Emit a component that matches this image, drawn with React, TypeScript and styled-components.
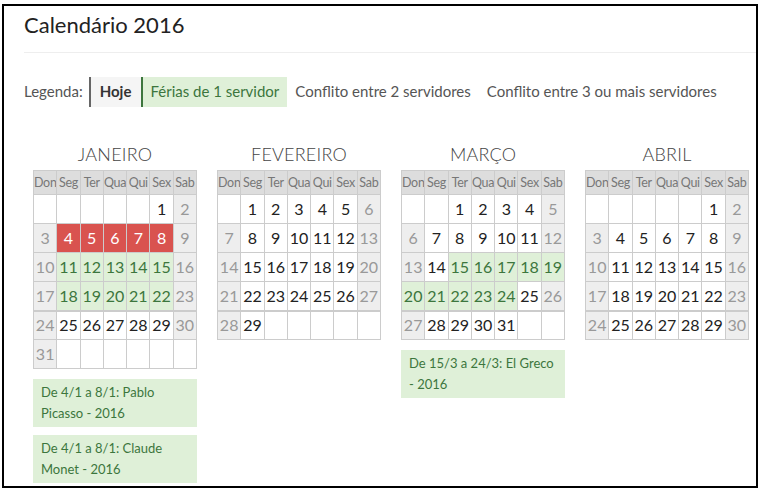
import React from "react";
import styled, { createGlobalStyle } from "styled-components";

const GlobalStyle = createGlobalStyle`
  html, body { margin: 0; padding: 0; background: #fff; }
  body { font-family: Lato, "Open Sans", sans-serif; color: #333; }
`;

const Frame = styled.div`
  box-sizing: border-box;
  width: 756px;
  height: 484px;
  margin: 4px 0 0 2px;
  border: 2px solid #000;
  overflow: hidden;
`;

const Header = styled.div`
  margin: 3px 0 0 20px;
  padding-bottom: 12px;
  border-bottom: 1px solid #eee;
`;

const Title = styled.h1`
  margin: 0;
  font-size: 22px;
  line-height: 31px;
  font-weight: 400;
  color: #222;
`;

const Legend = styled.div`
  display: flex;
  align-items: stretch;
  margin: 24px 0 0 20px;
  font-size: 15px;
  color: #555;
  height: 30px;
  line-height: 29px;
`;

const LegendLabel = styled.span`
  padding-right: 6px;
`;

const LegendItem = styled.span<{ $kind: "today" | "vac" | "plain" }>`
  padding: ${(p) => (p.$kind === "today" ? "0 10px 0 9px" : p.$kind === "vac" ? "0 8px 0 7px" : "0 8px 0 6px")};
  border-left: 2px solid
    ${(p) => (p.$kind === "today" ? "#666" : p.$kind === "vac" ? "#3c763d" : "transparent")};
  background: ${(p) => (p.$kind === "today" ? "#f5f5f5" : p.$kind === "vac" ? "#dff0d8" : "transparent")};
  color: ${(p) => (p.$kind === "today" ? "#333" : p.$kind === "vac" ? "#3c763d" : "#555")};
  font-weight: ${(p) => (p.$kind === "today" ? 700 : 400)};
`;

const Months = styled.div`
  display: grid;
  grid-template-columns: repeat(4, 164px);
  column-gap: 20px;
  align-items: start;
  margin: 35px 0 0 29px;
`;

const MonthCol = styled.div`
  display: flex;
  flex-direction: column;
`;

const MonthName = styled.div`
  text-align: center;
  font-size: 18px;
  font-weight: 300;
  line-height: 24px;
  color: #444;
  margin-bottom: 4px;
  letter-spacing: 0.2px;
`;

const Grid = styled.div`
  display: grid;
  grid-template-columns: repeat(7, 1fr);
  box-sizing: border-box;
  width: 164px;
  border-top: 1px solid #ccc;
  border-left: 1px solid #ccc;
`;

const HeadCell = styled.div`
  height: 23px;
  line-height: 23px;
  border-right: 1px solid #ccc;
  border-bottom: 1px solid #ccc;
  background: #ddd;
  color: #777;
  font-size: 12.5px;
  letter-spacing: -0.3px;
  text-align: center;
  overflow: hidden;
  white-space: nowrap;
`;

type Kind = "empty" | "week" | "weekend" | "vac" | "conflict";

const DayCell = styled.div<{ $kind: Kind; $thick: boolean }>`
  height: 28px;
  line-height: 28px;
  border-right: 1px solid #ccc;
  border-bottom: 1px solid #ccc;
  box-shadow: ${(p) => (p.$thick ? "inset 0 1px 0 #ccc" : "none")};
  text-align: center;
  font-size: 16px;
  overflow: hidden;
  white-space: nowrap;
  background: ${(p) =>
    p.$kind === "weekend"
      ? "#eee"
      : p.$kind === "vac"
      ? "#dff0d8"
      : p.$kind === "conflict"
      ? "#d9534f"
      : "#fff"};
  color: ${(p) =>
    p.$kind === "weekend"
      ? "#999"
      : p.$kind === "vac"
      ? "#3c763d"
      : p.$kind === "conflict"
      ? "#fff"
      : "#222"};
`;

const Note = styled.div`
  margin-top: 10px;
  background: #dff0d8;
  color: #3c763d;
  font-size: 13px;
  line-height: 21px;
  padding: 3px 5px 3px 8px;
  & + & {
    margin-top: 8px;
  }
`;

type Month = {
  name: string;
  start: number;
  days: number;
  vac: number[];
  conflict: number[];
  notes: string[];
};

const range = (a: number, b: number) => Array.from({ length: b - a + 1 }, (_, i) => a + i);

const months: Month[] = [
  {
    name: "JANEIRO",
    start: 5,
    days: 31,
    vac: [...range(11, 15), ...range(18, 22)],
    conflict: range(4, 8),
    notes: ["De 4/1 a 8/1: Pablo Picasso - 2016", "De 4/1 a 8/1: Claude Monet - 2016"],
  },
  { name: "FEVEREIRO", start: 1, days: 29, vac: [], conflict: [], notes: [] },
  {
    name: "MARÇO",
    start: 2,
    days: 31,
    vac: range(15, 24),
    conflict: [],
    notes: ["De 15/3 a 24/3: El Greco - 2016"],
  },
  { name: "ABRIL", start: 5, days: 30, vac: [], conflict: [], notes: [] },
];

const weekdays = ["Don", "Seg", "Ter", "Qua", "Qui", "Sex", "Sab"];

function MonthView({ m }: { m: Month }) {
  const total = Math.ceil((m.start + m.days) / 7) * 7;
  const cells = Array.from({ length: total }, (_, i) => {
    const d = i - m.start + 1;
    const col = i % 7;
    const row = Math.floor(i / 7);
    let kind: Kind = "empty";
    if (d >= 1 && d <= m.days) {
      if (m.conflict.includes(d)) kind = "conflict";
      else if (m.vac.includes(d)) kind = "vac";
      else if (col === 0 || col === 6) kind = "weekend";
      else kind = "week";
    }
    return (
      <DayCell key={i} $kind={kind} $thick={row === 4}>
        {d >= 1 && d <= m.days ? d : ""}
      </DayCell>
    );
  });
  return (
    <MonthCol>
      <MonthName>{m.name}</MonthName>
      <Grid>
        {weekdays.map((w) => (
          <HeadCell key={w}>{w}</HeadCell>
        ))}
        {cells}
      </Grid>
      {m.notes.map((n) => (
        <Note key={n}>{n}</Note>
      ))}
    </MonthCol>
  );
}

export default function App() {
  return (
    <>
      <GlobalStyle />
      <Frame>
        <Header>
          <Title>Calendário 2016</Title>
        </Header>
        <Legend>
          <LegendLabel>Legenda:</LegendLabel>
          <LegendItem $kind="today">Hoje</LegendItem>
          <LegendItem $kind="vac">Férias de 1 servidor</LegendItem>
          <LegendItem $kind="plain">Conflito entre 2 servidores</LegendItem>
          <LegendItem $kind="plain">Conflito entre 3 ou mais servidores</LegendItem>
        </Legend>
        <Months>
          {months.map((m) => (
            <MonthView key={m.name} m={m} />
          ))}
        </Months>
      </Frame>
    </>
  );
}
